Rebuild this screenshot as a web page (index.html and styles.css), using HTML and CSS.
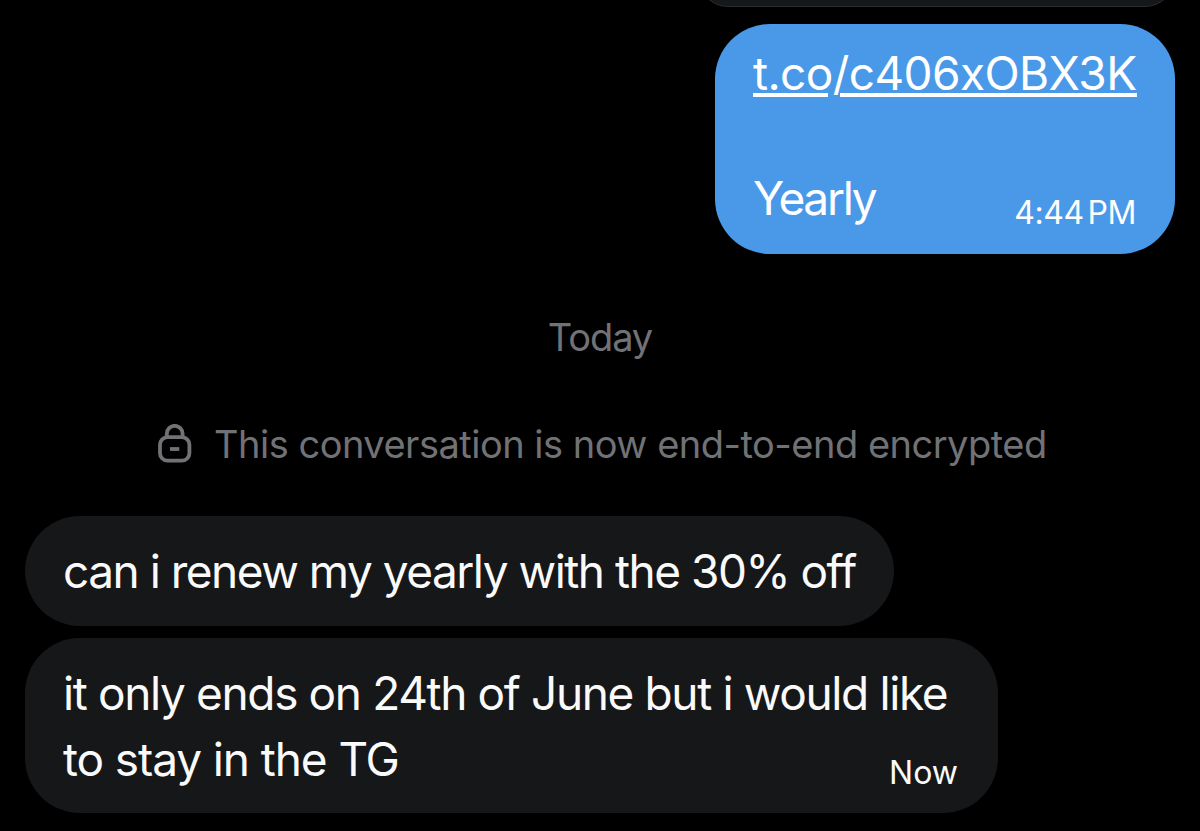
FILE: index.html
```html
<!DOCTYPE html>
<html lang="en">
<head>
<meta charset="utf-8">
<title>Conversation</title>
<link rel="stylesheet" href="styles.css">
</head>
<body>
<main class="chat">
  <div class="previous"></div>
  <section class="bubble sent">
    <a class="link" href="#">t.co/c406xOBX3K</a>
    <div class="row"><span class="text w-yearly">Yearly</span><time class="time w-time">4:44 PM</time></div>
  </section>
  <div class="day"><span class="w-today">Today</span></div>
  <div class="notice">
    <svg class="lock" width="34" height="40" viewBox="0 0 34 40" fill="none" stroke="currentColor" stroke-width="3.8">
      <rect x="2" y="13.1" width="29.4" height="23.6" rx="7.5"/>
      <path d="M8.8 13V9.7a7.9 7.9 0 0 1 15.8 0V13"/>
      <path d="M12 25h9.3"/>
    </svg>
    <span class="w-notice">This conversation is now end-to-end encrypted</span>
  </div>
  <section class="bubble received first"><span class="text w-renew">can i renew my yearly with the 30% off</span></section>
  <section class="bubble received second">
    <span class="text w-ends">it only ends on 24th of June but i would like</span>
    <div class="row"><span class="text w-stay">to stay in the TG</span><time class="time w-now">Now</time></div>
  </section>
</main>
</body>
</html>
```
FILE: styles.css
```css
* { box-sizing: border-box; }
body { margin: 0; background: #000; font-family: Inter, "Liberation Sans", sans-serif; }
.chat { width: 1200px; height: 831px; overflow: hidden; display: flex; flex-direction: column; padding: 0 25px; }
.previous { align-self: flex-end; width: 477px; height: 70px; margin-top: -63px; flex: none; border: 1.5px solid #2b2c30; border-radius: 30px; background: #16171a; }
.bubble { display: flex; flex-direction: column; flex: none; border-radius: 55px; color: #fafafa; font-size: 46px; line-height: 66px; white-space: nowrap; }
.sent { align-self: flex-end; width: 460px; height: 230px; margin-top: 17px; padding: 16px 38px 23px; background: #4a99e9; justify-content: space-between; color: #fff; }
/* The underline breaks around the slash */
.link {
  color: inherit;
  text-decoration: none;
  letter-spacing: -0.6px;
  background: linear-gradient(to right, #fff 75px, transparent 75px 87px, #fff 87px) 0 53px / 384px 4px no-repeat;
}
.row { display: flex; justify-content: space-between; }
.time { font-size: 32px; line-height: 66px; height: 66px; }
.day { margin-top: 57px; height: 52px; line-height: 52px; text-align: center; font-size: 38px; color: #717276; flex: none; }
.notice { display: flex; align-items: center; gap: 22px; margin: 55px 0 0 133px; height: 52px; font-size: 38px; line-height: 52px; color: #717276; white-space: nowrap; flex: none; }
.lock { flex: none; }
.received { background: #161719; padding: 22px 38px; }
.first { width: 869px; height: 110px; margin-top: 46px; }
.second { width: 973px; height: 175px; margin-top: 12px; }
.w-yearly { letter-spacing: -2.3px; }
.w-renew { letter-spacing: -1.5px; }
.w-ends { letter-spacing: -1.37px; }
.w-stay { letter-spacing: -1.1px; }
.w-time { padding: 15px 1px 0 0; letter-spacing: -0.4px; word-spacing: -5px; }
.w-now { padding: 14px 2px 0 0; }
.w-today { letter-spacing: -1.1px; }
.w-notice { letter-spacing: -0.5px; }
```
